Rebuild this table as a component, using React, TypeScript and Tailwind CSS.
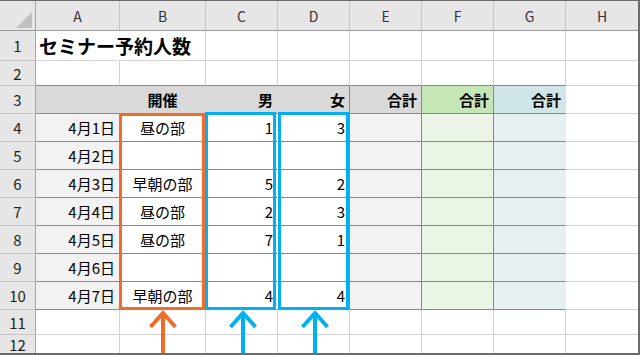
const days = [
  ["4月1日", "昼の部", "1", "3"],
  ["4月2日", "", "", ""],
  ["4月3日", "早朝の部", "5", "2"],
  ["4月4日", "昼の部", "2", "3"],
  ["4月5日", "昼の部", "7", "1"],
  ["4月6日", "", "", ""],
  ["4月7日", "早朝の部", "4", "4"],
];

const letters = ["A", "B", "C", "D", "E", "F", "G", "H"];

const base = "flex items-center leading-none whitespace-nowrap border-r border-b";
const plain = `${base} bg-white border-[#d4d4d4]`;

function RowNum({ n, last }: { n: number; last?: boolean }) {
  return (
    <div
      className={
        last
          ? "flex items-center justify-center bg-[#e6e6e6] border-r border-[#a6a6a6] text-[15px] text-[#222] leading-none"
          : "flex items-center justify-center bg-[#e6e6e6] border-r border-b border-r-[#a6a6a6] border-b-[#c6c6c6] text-[15px] text-[#222] leading-none"
      }
    >
      {n}
    </div>
  );
}

function BlankRow({ n, tealBottom, last }: { n: number; tealBottom?: boolean; last?: boolean }) {
  return (
    <>
      <RowNum n={n} last={last} />
      {letters.map((l) =>
        l === "H" ? (
          <div key={l} className={last ? "bg-white" : "bg-white border-b border-[#d4d4d4]"} />
        ) : (
          <div
            key={l}
            className={
              last
                ? "bg-white border-r border-[#d4d4d4]"
                : tealBottom
                  ? "bg-white border-r border-b border-r-[#d4d4d4] border-b-[#5c9c9c]"
                  : plain
            }
          />
        )
      )}
    </>
  );
}

function Arrow({ x, color }: { x: number; color: string }) {
  return (
    <g stroke={color} strokeWidth={4} fill="none" strokeLinejoin="miter" strokeMiterlimit={10}>
      <line x1={x} y1={313} x2={x} y2={353} />
      <polyline points={`${x - 12.5},327 ${x},313 ${x + 12.5},327`} />
    </g>
  );
}

export default function App() {
  return (
    <div className="w-[640px] h-[355px] bg-white font-['Noto_Sans_CJK_JP',sans-serif] text-black">
      <div className="relative w-[640px] h-[355px] border-t border-r-2 border-b-2 border-[#6b6b6b]">
        <div className="grid h-full grid-cols-[36px_84px_86px_repeat(5,72px)_1fr] grid-rows-[30px_30px_25px_repeat(8,28px)_25px_1fr]">
          {/* column headings */}
          <div className="flex items-end justify-end pr-[3px] pb-[2px] bg-[#e6e6e6] border-r border-b border-r-[#a6a6a6] border-b-[#9a9a9a]">
            <svg width="16" height="16" viewBox="0 0 16 16">
              <polygon points="16,0 16,16 0,16" fill="#bfbfbf" />
            </svg>
          </div>
          {letters.map((l) => (
            <div
              key={l}
              className={
                l === "H"
                  ? "flex items-center justify-center bg-[#e6e6e6] border-b border-[#9a9a9a] text-[14px] text-[#333] leading-none"
                  : "flex items-center justify-center bg-[#e6e6e6] border-r border-b border-r-[#c4c4c4] border-b-[#9a9a9a] text-[14px] text-[#333] leading-none"
              }
            >
              {l}
            </div>
          ))}

          {/* row 1: title */}
          <RowNum n={1} />
          <div className={`${base} relative z-10 bg-white border-r-white border-b-[#d4d4d4] pl-[3px] text-[19px] font-bold`}>
            セミナー予約人数
          </div>
          {letters.slice(1).map((l) =>
            l === "H" ? <div key={l} className="bg-white border-b border-[#d4d4d4]" /> : <div key={l} className={plain} />
          )}

          <BlankRow n={2} tealBottom />

          {/* row 3: headings */}
          <RowNum n={3} />
          <div className={`${base} bg-[#d9d9d9] border-r-[#d9d9d9] border-b-[#5c9c9c]`} />
          <div className={`${base} justify-center bg-[#d9d9d9] border-r-[#d9d9d9] border-b-[#5c9c9c] text-[15px] font-bold`}>開催</div>
          <div className={`${base} justify-end pr-1 bg-[#d9d9d9] border-r-[#d9d9d9] border-b-[#5c9c9c] text-[15px] font-bold`}>男</div>
          <div className={`${base} justify-end pr-1 bg-[#d9d9d9] border-[#5c9c9c] text-[15px] font-bold`}>女</div>
          <div className={`${base} justify-end pr-1 bg-[#d9d9d9] border-[#5c9c9c] text-[15px] font-bold`}>合計</div>
          <div className={`${base} justify-end pr-1 bg-[#c6e6b8] border-[#5c9c9c] text-[15px] font-bold`}>合計</div>
          <div className={`${base} justify-end pr-1 bg-[#d0e5e8] border-r-[#d0e5e8] border-b-[#5c9c9c] text-[15px] font-bold`}>合計</div>
          <div className="bg-white border-b border-[#d4d4d4]" />

          {/* rows 4-10: schedule */}
          {days.map(([date, session, men, women], i) => (
            <div key={date} className="contents">
              <RowNum n={i + 4} />
              <div className={`${base} justify-end pr-1 bg-[#f2f2f2] border-r-[#f2f2f2] border-b-[#5c9c9c] text-[15px]`}>{date}</div>
              <div className={`${base} justify-center bg-white border-r-white border-b-[#5c9c9c] text-[15px]`}>{session}</div>
              <div className={`${base} justify-end pr-1 bg-white border-r-white border-b-[#5c9c9c] text-[15px]`}>{men}</div>
              <div className={`${base} justify-end pr-1 bg-white border-[#5c9c9c] text-[15px]`}>{women}</div>
              <div className={`${base} bg-[#f2f2f2] border-[#5c9c9c]`} />
              <div className={`${base} bg-[#ebf5e6] border-[#5c9c9c]`} />
              <div className={`${base} bg-[#e6eff2] border-r-[#e6eff2] border-b-[#5c9c9c]`} />
              <div className="bg-white border-b border-[#d4d4d4]" />
            </div>
          ))}

          <BlankRow n={11} />
          <BlankRow n={12} last />
        </div>

        {/* highlight frames */}
        <div className="absolute left-[119px] top-[112px] w-[86px] h-[197px] border-[3px] border-[#ef6c2c]" />
        <div className="absolute left-[205px] top-[111px] w-[71px] h-[198px] border-[3px] border-[#00b0f0]" />
        <div className="absolute left-[278px] top-[111px] w-[71px] h-[198px] border-[3px] border-[#00b0f0]" />

        <svg className="absolute left-0 top-[-1px] pointer-events-none" width="638" height="354" viewBox="0 0 638 354">
          <Arrow x={163} color="#ef6c2c" />
          <Arrow x={243} color="#00b0f0" />
          <Arrow x={315} color="#00b0f0" />
        </svg>
      </div>
    </div>
  );
}
